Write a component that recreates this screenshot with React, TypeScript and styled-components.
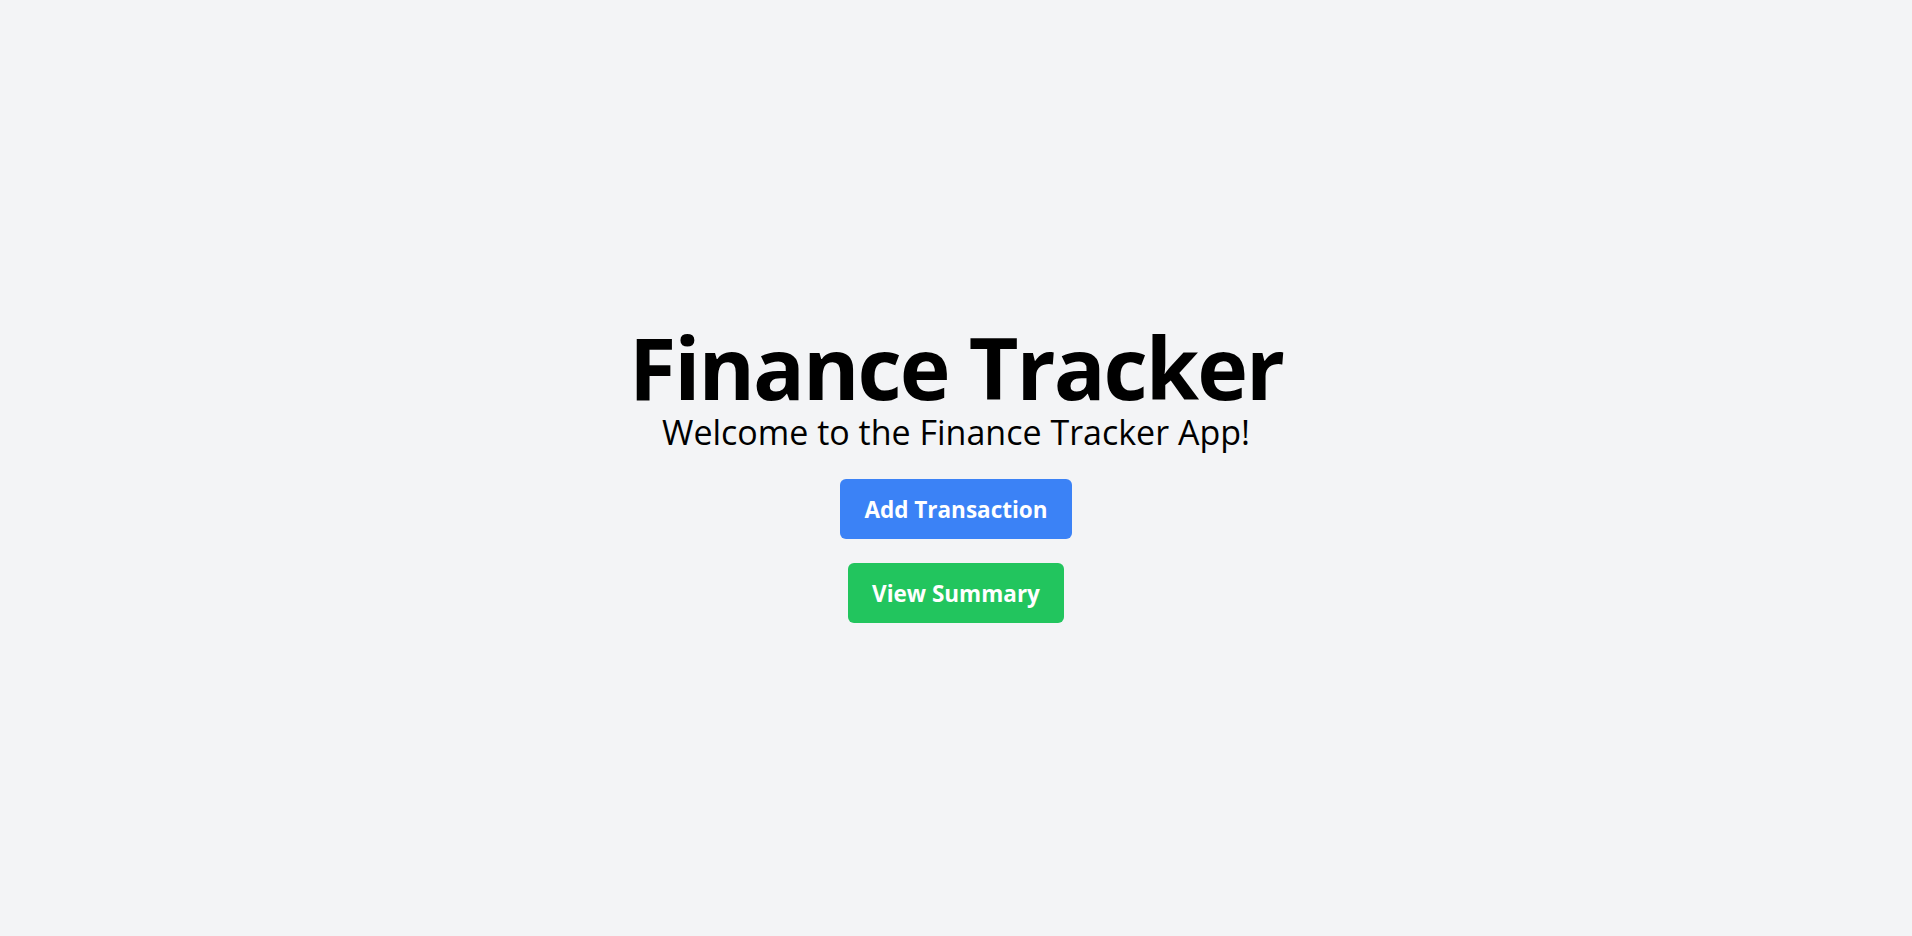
import { createGlobalStyle, styled } from "styled-components";

const GlobalStyle = createGlobalStyle`
  * {
    box-sizing: border-box;
  }

  body {
    margin: 0;
    background: #f3f4f6;
    font-family: "Open Sans", "Noto Sans", sans-serif;
    color: #000;
  }
`;

const App = () => {
  return (
    <>
      <GlobalStyle />
      <HomeLayout>
        <HomeTitle>Finance Tracker</HomeTitle>
        <HomeSubtitle>Welcome to the Finance Tracker App!</HomeSubtitle>
        <HomeButtonBox>
          <HomeButton $color="#3b82f6">Add Transaction</HomeButton>
          <HomeButton $color="#22c55e">View Summary</HomeButton>
        </HomeButtonBox>
      </HomeLayout>
    </>
  );
};

export default App;

const HomeLayout = styled.div`
  min-height: 100vh;

  display: flex;
  flex-direction: column;
  align-items: center;
  justify-content: center;
`;

const HomeTitle = styled.h1`
  margin: 6px 0 0 0;

  font-size: 86px;
  font-weight: 700;
  line-height: 96px;
  letter-spacing: -2px;
`;

const HomeSubtitle = styled.p`
  margin: 0 0 30px 0;

  font-size: 34px;
  line-height: 34px;
`;

const HomeButtonBox = styled.div`
  display: flex;
  flex-direction: column;
  align-items: center;
  gap: 24px;
`;

const HomeButton = styled.button<{ $color: string }>`
  height: 60px;
  padding: 0 24px;

  border: none;
  border-radius: 6px;
  background: ${({ $color }) => $color};

  color: #fff;
  font-family: inherit;
  font-size: 22.5px;
  font-weight: 700;

  cursor: pointer;
`;
